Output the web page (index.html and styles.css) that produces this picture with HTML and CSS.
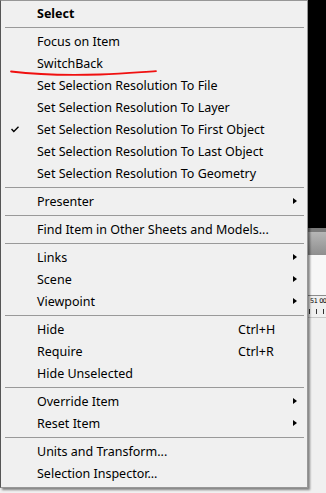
FILE: index.html
```html
<!DOCTYPE html>
<html>
<head>
    <meta charset="utf-8" />
    <title>Select context menu</title>
    <link rel="stylesheet" href="styles.css">
</head>
<body>
<div class="screen">
    <div class="menu">
        <div class="item head">Select</div>
        <div class="sep"></div>
        <div class="item">Focus on Item</div>
        <div class="item">SwitchBack</div>
        <div class="item">Set Selection Resolution To File</div>
        <div class="item">Set Selection Resolution To Layer</div>
        <div class="item checked">
            <svg class="check" width="8" height="7" viewBox="0 0 8 7"><polyline points="0.5,3 2.8,5.5 7.5,0.8" fill="none" stroke="#000" stroke-width="1.4"/></svg>
            Set Selection Resolution To First Object
        </div>
        <div class="item">Set Selection Resolution To Last Object</div>
        <div class="item">Set Selection Resolution To Geometry</div>
        <div class="sep"></div>
        <div class="item sub">Presenter <span class="arrow"></span></div>
        <div class="sep"></div>
        <div class="item">Find Item in Other Sheets and Models...</div>
        <div class="sep"></div>
        <div class="item sub">Links <span class="arrow"></span></div>
        <div class="item sub">Scene <span class="arrow"></span></div>
        <div class="item sub">Viewpoint <span class="arrow"></span></div>
        <div class="sep"></div>
        <div class="item">Hide <span class="key">Ctrl+H</span></div>
        <div class="item">Require <span class="key">Ctrl+R</span></div>
        <div class="item">Hide Unselected</div>
        <div class="sep"></div>
        <div class="item sub">Override Item <span class="arrow"></span></div>
        <div class="item sub">Reset Item <span class="arrow"></span></div>
        <div class="sep"></div>
        <div class="item">Units and Transform...</div>
        <div class="item">Selection Inspector...</div>

        <!-- hand drawn mark under SwitchBack -->
        <svg class="scribble" width="148" height="10" viewBox="0 0 148 10">
            <path d="M1 3.5 C 30 7, 60 7.5, 90 6.5 C 115 5.5, 132 4, 146 3.2" fill="none" stroke="#f01010" stroke-width="1.8" stroke-linecap="round"/>
        </svg>
    </div>

    <div class="backdrop">
        <div class="viewport"></div>
        <div class="toolbar"></div>
        <div class="pane"></div>
        <div class="ruler">
            <span class="stamp">51 00</span>
            <div class="ticks"><i></i><i></i><i></i></div>
        </div>
    </div>
</div>
</body>
</html>
```

FILE: styles.css
```css
body {
    margin: 0;
    background: #f0f0f0;
    font-family: "Noto Sans", "Open Sans", sans-serif;
    font-size: 12.5px;
    color: #000;
    overflow: hidden;
}
.screen {
    display: flex;
    width: 326px;
    height: 493px;
}
.menu {
    position: relative;
    z-index: 1;
    box-sizing: border-box;
    width: 308px;
    height: 488px;
    flex: none;
    padding: 1px 0 3px 0;
    background: #f0f0f0;
    border: 1px solid #979797;
    border-left-color: #555;
    box-shadow: 2px 2px 2px rgba(0,0,0,.45);
}
.item {
    display: flex;
    align-items: center;
    height: 22px;
    padding: 0 10px 0 36px;
    white-space: nowrap;
    position: relative;
}
.head {
    font-weight: bold;
}
.check {
    position: absolute;
    left: 10px;
    top: 8px;
}
.key {
    margin-left: auto;
    width: 59px;
}
.arrow {
    margin-left: auto;
    width: 0;
    height: 0;
    border-left: 4px solid #000;
    border-top: 3.5px solid transparent;
    border-bottom: 3.5px solid transparent;
}
.sep {
    height: 1px;
    margin: 3px 3px 2px 4px;
    background: #999;
}
.scribble {
    position: absolute;
    left: 9px;
    top: 67px;
}

.backdrop {
    flex: 1;
    display: flex;
    flex-direction: column;
    overflow: hidden;
}
.viewport {
    height: 228px;
    background: #000;
}
.toolbar {
    height: 23px;
    border-top: 4px solid #7a7a7a;
    background: linear-gradient(#b6b6b6, #8e8e8e);
}
.pane {
    height: 40px;
    background: #f7f7f7;
    border-bottom: 1px solid #8c8c8c;
}
.ruler {
    height: 21px;
    background: #f0f0f0;
    border-bottom: 1px solid #c8c8c8;
}
.stamp {
    display: block;
    white-space: nowrap;
    font-family: "DejaVu Sans", sans-serif;
    font-size: 6.5px;
    line-height: 9px;
    margin: 1px 0 0 2px;
    letter-spacing: -.4px;
}
.ticks {
    display: flex;
    gap: 6px;
    padding: 3px 0 0 1px;
}
.ticks i {
    width: 1px;
    height: 5px;
    background: #333;
}
```
